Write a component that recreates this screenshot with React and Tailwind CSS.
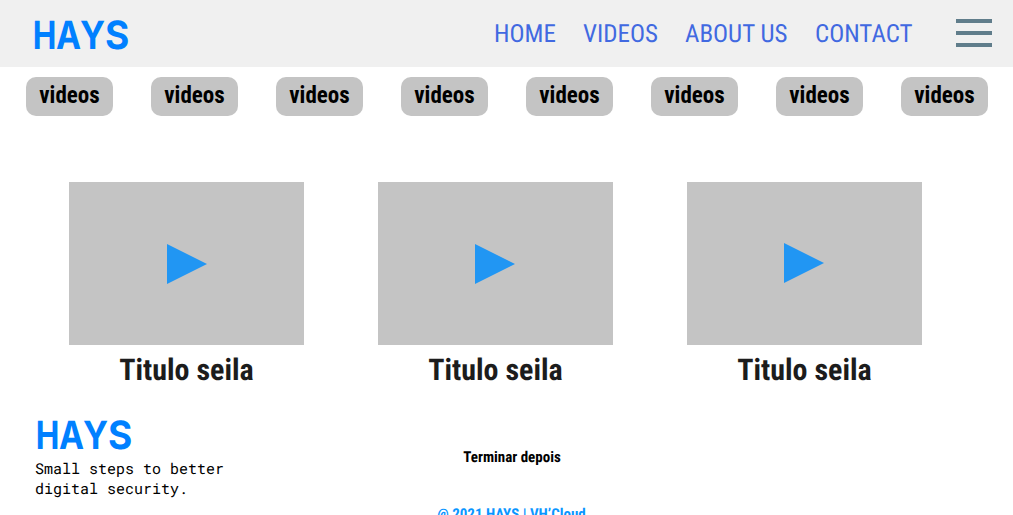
import React from "react";

const condensed = "font-['Roboto_Condensed','Roboto',sans-serif] [font-stretch:75%]";

function Logo() {
  return (
    <span className="flex h-10 w-[96px] font-['Inter',sans-serif] text-[39px] leading-[40px] font-bold text-[#0080ff]">
      <span className="w-[22px] origin-left scale-x-[0.81] -translate-x-[1.3px]">H</span>
      <span className="w-[24px] origin-left scale-x-[0.86]">A</span>
      <span className="w-[25px] origin-left scale-x-[0.88]">Y</span>
      <span className="w-[23px] origin-left scale-x-[0.95]">S</span>
    </span>
  );
}

function Card({ play }) {
  return (
    <article className="w-[235px]">
      <div className="h-[163px] bg-[#c4c4c4]">
        <svg className="block h-full w-full" viewBox="0 0 235 163" fill="#2196f3">
          <path d={play} />
        </svg>
      </div>
      <h2 className={`${condensed} pt-2 text-center text-[30px] leading-[36px] font-bold whitespace-nowrap text-[#1c1c1c]`}>
        Titulo seila
      </h2>
    </article>
  );
}

export default function App() {
  return (
    <div className="h-[515px] w-[1013px] overflow-hidden bg-white antialiased [text-rendering:geometricPrecision]">
      <header className="flex h-[67px] items-start bg-[#f0f0f0] pt-4 pl-[34px]">
        <Logo />
        <nav className={`${condensed} ml-[364px] flex pt-1 text-[25px] leading-[30px] whitespace-nowrap text-[#4169e1]`}>
          <a className="w-[89px]">HOME</a>
          <a className="w-[102px]">VIDEOS</a>
          <a className="w-[130px]">ABOUT US</a>
          <a className="w-[141px]">CONTACT</a>
        </nav>
        <button aria-label="Menu" className="mt-[3px] flex w-9 flex-col gap-2">
          <span className="h-1 bg-[#607d8b]" />
          <span className="h-1 bg-[#607d8b]" />
          <span className="h-1 bg-[#607d8b]" />
        </button>
      </header>
      <div className="flex gap-[38px] pt-[10px] pl-[26px]">
        {Array.from({ length: 8 }, (_, i) => (
          <button key={i} className={`${condensed} h-[39px] w-[87px] shrink-0 rounded-[10px] bg-[#c4c4c4] pb-px text-[23px] leading-[38px] font-bold text-black`}>
            videos
          </button>
        ))}
      </div>
      <main className="flex gap-[74px] pt-[66px] pl-[69px]">
        <Card play="M98 62L138 82L98 102Z" />
        <Card play="M97 62L137 82L97 102Z" />
        <Card play="M97 61L137 81L97 101Z" />
      </main>
      <footer className="flex pt-[27px] pl-[35px]">
        <div className="w-[366px]">
          <div className="pl-[2px]">
            <Logo />
          </div>
          <p className="pt-[3px] font-['Roboto_Mono','DejaVu_Sans_Mono',monospace] text-[15px] leading-5 text-black">
            Small steps to better
            <br />
            digital security.
          </p>
        </div>
        <div className={`${condensed} w-[222px] pt-[32px] text-center text-[15px] leading-[18px] font-bold whitespace-nowrap`}>
          <p className="text-black">Terminar depois</p>
          <p className="pt-[39px] pr-px text-[#0a96ff]">@ 2021 HAYS | VH’Cloud</p>
        </div>
      </footer>
    </div>
  );
}
